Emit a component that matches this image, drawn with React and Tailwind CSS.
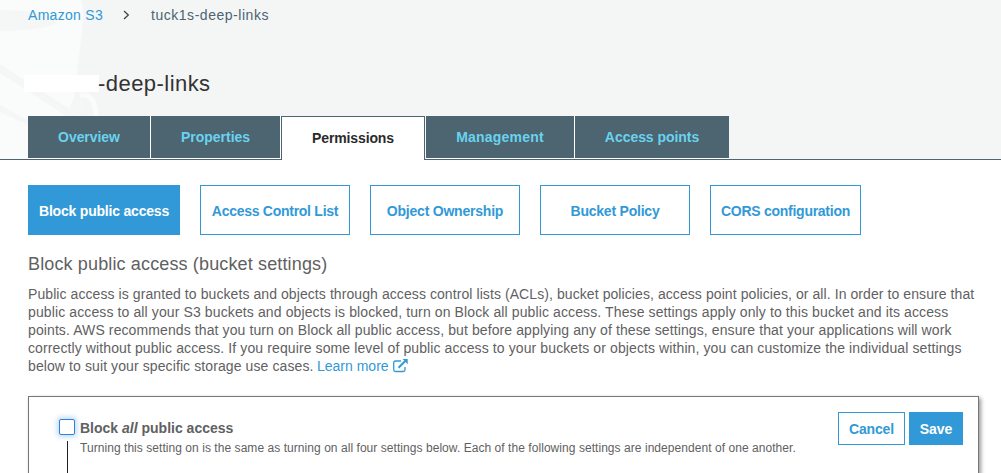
const tabs = [
  { label: 'Overview', width: 'w-[122px]', text: 'tracking-[-0.05px]' },
  { label: 'Properties', width: 'w-[129px]', text: 'tracking-[0px]' },
  { label: 'Permissions', width: 'w-[144px]', text: 'tracking-[-0.12px]', active: true },
  { label: 'Management', width: 'w-[148px]', text: 'tracking-[0.2px]' },
  { label: 'Access points', width: 'w-[154px]', text: 'tracking-[-0.05px]' },
];

const sections = [
  { label: 'Block public access', width: 'w-[152px]', text: 'tracking-[-0.2px]', active: true },
  { label: 'Access Control List', width: 'w-[150px]', text: 'tracking-[-0.27px]' },
  { label: 'Object Ownership', width: 'w-[150px]', text: 'tracking-[-0.22px]' },
  { label: 'Bucket Policy', width: 'w-[150px]', text: 'tracking-[-0.22px]' },
  { label: 'CORS configuration', width: 'w-[151px]', text: 'tracking-[-0.27px]' },
];

const lines = [
  { text: 'Public access is granted to buckets and objects through access control lists (ACLs), bucket policies, access point policies, or all. In order to ensure that', spacing: 'tracking-[0.08px]' },
  { text: 'public access to all your S3 buckets and objects is blocked, turn on Block all public access. These settings apply only to this bucket and its access', spacing: 'tracking-[0.115px]' },
  { text: 'points. AWS recommends that you turn on Block all public access, but before applying any of these settings, ensure that your applications will work', spacing: 'tracking-[0.103px]' },
  { text: 'correctly without public access. If you require some level of public access to your buckets or objects within, you can customize the individual settings', spacing: 'tracking-[0.106px]' },
];

function BucketWatermark() {
  return (
    <svg className="absolute left-0 top-0" width="110" height="159" viewBox="0 0 110 159" fill="none" aria-hidden="true">
      <path d="M0 0H81Q84 8 83 22L74 98Q70 106 70 109L82 116H28V159H0Z" fill="#fafcfb" />
      <path d="M80 95Q95 93 96 116" stroke="#fafcfb" strokeWidth="5" />
      <path d="M0 10Q40 10 57 17Q60 22 50 26Q30 31 0 31Z" fill="#f5f7f6" />
      <path d="M0 64V73L66 116H77Q84 112 84 102Q80 96 78 101Q73 111 68 108Z" fill="#f5f7f6" />
      <path d="M0 105L28 120V125L0 112Z" fill="#f5f7f6" />
    </svg>
  );
}

export default function App() {
  return (
    <div className="h-[473px] w-[1001px] overflow-hidden bg-white font-['Liberation_Sans',Arial,sans-serif] text-[14px] text-[#5f6162]">
      <header className="relative h-[160px] border-b border-[#4d6471] bg-[#f4f6f6]">
        <BucketWatermark />
        <div className="relative flex h-full flex-col">
          <nav className="flex h-[30px] shrink-0 items-center pl-7 whitespace-nowrap">
            <a className="w-[95px] pt-px tracking-[0.3px] text-[#3199d7]">Amazon S3</a>
            <svg className="mr-[21px]" width="7" height="10" viewBox="0 0 7 10" fill="none" stroke="#444" strokeWidth="1.3">
              <path d="M1 1l4.3 4L1 9" />
            </svg>
            <span className="pt-px tracking-[0.53px] text-[#4d6471]">tuck1s-deep-links</span>
          </nav>
          <h1 className="mt-[38px] flex h-[30px] shrink-0 items-center pl-6 text-[22px] whitespace-nowrap text-[#333]">
            <span className="h-[17px] w-[75px] bg-white" />
            <span className="-ml-px pt-px tracking-[0.45px]">-deep-links</span>
          </h1>
          <div className="mt-[18px] flex h-[43px] shrink-0 pl-7">
            {tabs.map((t) =>
              t.active ? (
                <div key={t.label} className={`${t.width} mr-px flex h-[44px] items-center justify-center border border-b-0 border-[#4d6471] bg-white font-bold text-[#2a2a2a]`}>
                  <span className={t.text}>{t.label}</span>
                </div>
              ) : (
                <div key={t.label} className={`${t.width} box-content h-[42px] border-r border-b border-white bg-[#4d6471] bg-clip-padding font-bold text-[#69d3ef] last:border-r-0`}>
                  <div className="flex h-full items-center justify-center"><span className={t.text}>{t.label}</span></div>
                </div>
              )
            )}
          </div>
        </div>
      </header>
      <main className="px-7 pt-[25px]">
        <div className="flex gap-5">
          {sections.map((s) => (
            <button
              key={s.label}
              className={`${s.width} ${s.active ? 'bg-[#3199d7] text-white' : 'bg-white text-[#3199d7]'} flex h-[50px] items-center justify-center border border-[#3199d7] pt-[3px] font-bold whitespace-nowrap`}
            >
              <span className={s.text}>{s.label}</span>
            </button>
          ))}
        </div>
        <h2 className="mt-[17px] h-6 text-[18px] leading-6 tracking-[0.14px] whitespace-nowrap">Block public access (bucket settings)</h2>
        <div className="mt-[9px] leading-[18px] whitespace-nowrap">
          {lines.map((l) => (
            <div key={l.text} className="h-[18px]"><span className={l.spacing}>{l.text}</span></div>
          ))}
          <div className="flex h-[18px]">
            <span className="w-[289px] tracking-[0.1px]">below to suit your specific storage use cases.</span>
            <a className="flex text-[#3199d7]">
              <span className="w-[76px]">Learn more</span>
              <svg className="mt-[2px]" width="15" height="14" viewBox="0 0 15 14" fill="none" stroke="#3199d7" strokeWidth="1.3">
                <path d="M8 2H2.500Q0.700 2 0.700 3.700V10.800Q0.700 12.500 2.500 12.500H10.300Q12 12.500 12 10.800V8" />
                <path d="M5.500 8.800L12 2.300" strokeWidth="2" />
                <path d="M9.500 0H14.700V5.200Z" fill="#3199d7" stroke="none" />
              </svg>
            </a>
          </div>
        </div>
        <section className="mt-[21px] flex h-[100px] w-[951px] border border-[#777] pl-[30px] shadow-[2px_2px_4px_rgba(0,0,0,0.4)]">
          <div className="flex w-[21px] flex-col pt-[22px]">
            <span className="h-4 w-4 shrink-0 rounded-[2px] border border-[#2f80d8] bg-white shadow-[0_0_5px_2px_rgba(100,165,235,0.4)]" />
            <span className="mt-[6px] ml-2 w-px flex-1 bg-[#222]" />
          </div>
          <div className="flex-1 pt-[22px] whitespace-nowrap">
            <div className="h-[18px] leading-[18px] font-bold"><span>Block <i>all</i> public access</span></div>
            <div className="mt-[2px] h-[18px] text-[12px] leading-[18px]"><span className="tracking-[0.052px]">Turning this setting on is the same as turning on all four settings below. Each of the following settings are independent of one another.</span></div>
          </div>
          <div className="flex gap-1 pt-[15px] pr-[15px]">
            <button className="h-[33px] w-[67px] border border-[#3199d7] pt-px font-bold tracking-[-0.15px] text-[#3199d7]">Cancel</button>
            <button className="h-[33px] w-[54px] bg-[#3199d7] pt-px font-bold text-white">Save</button>
          </div>
        </section>
      </main>
    </div>
  );
}
